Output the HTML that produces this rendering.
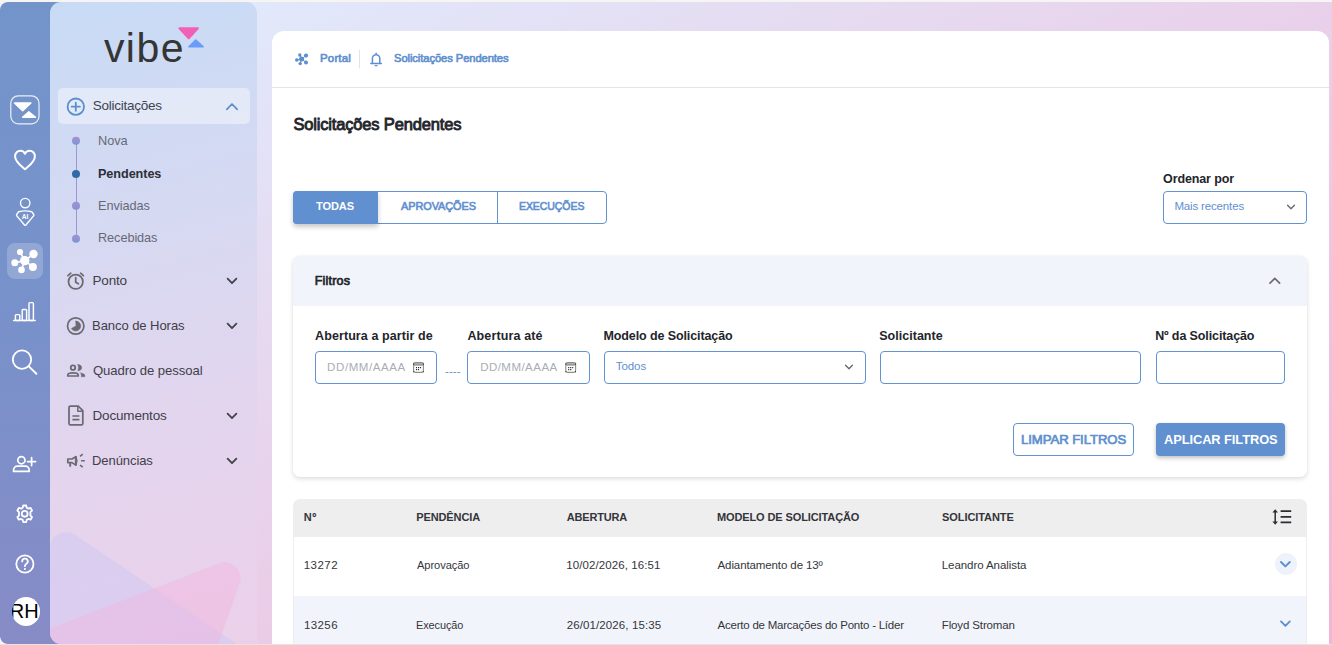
<!DOCTYPE html>
<html lang="pt-BR">
<head>
<meta charset="utf-8">
<title>Solicitações Pendentes</title>
<style>
html,body{margin:0;padding:0}
body{width:1332px;height:645px;overflow:hidden;position:relative;background:#f6f5f3;font-family:"Liberation Sans",sans-serif}
.abs{position:absolute;box-sizing:border-box}
#app{left:0;top:2px;width:1332px;height:642px;border-radius:7.5px 0 0 7.5px;background:linear-gradient(154deg,#dfeefe 0%,#f3b4d7 100%);overflow:hidden}
#botline{left:0;top:644px;width:1332px;height:1px;background:#e4e4e0}
#rail{left:0;top:0;width:70px;height:642px;border-radius:7.5px 0 0 7.5px;background:linear-gradient(180deg,#7394cb 0%,#7891ca 50%,#878bc6 100%)}
#side{left:50px;top:0;width:207px;height:642px;border-radius:11px 11px 0 11px;background:linear-gradient(165deg,#c8dbf5 0%,#d6d9f2 35%,#e3d5ee 65%,#ecd0ea 100%);overflow:hidden}
#card{left:272px;top:29px;width:1057px;height:620px;border-radius:12px 12px 0 0;background:#fff}
#hline{left:272px;top:85px;width:1057px;height:1px;background:#e3e5e8}
.t{position:absolute;white-space:pre;font-family:"Liberation Sans",sans-serif}
.bx{position:absolute;box-sizing:border-box;border:1px solid #6392d1;border-radius:4px;background:#fff}
svg.ov{position:absolute;left:0;top:0;width:1332px;height:645px;pointer-events:none}
</style>
</head>
<body>
<div id="app" class="abs">
  <div id="rail" class="abs"></div>
  <div id="side" class="abs">
    <svg class="abs" style="left:0;top:0" width="207" height="642" viewBox="50 2 207 642">
      <path d="M50 700 L50 548.4 A16.3 16.3 0 0 1 75.4 534.9 L260 659.5 L260 700 Z" fill="#c9c8f5" fill-opacity="0.45"/>
      <path d="M30 636.4 L218.5 563.4 A16 16 0 0 1 239.5 584 L211 664.5 L30 664.5 Z" fill="#f2b3de" fill-opacity="0.42"/>
    </svg>
  </div>
  <div id="card" class="abs"></div>
  <div id="hline" class="abs"></div>

  <!-- sidebar active pill -->
  <div class="abs" style="left:58px;top:86px;width:192px;height:36px;border-radius:5px;background:rgba(255,255,255,.42)"></div>

  <!-- tabs -->
  <div class="bx" style="left:293px;top:189px;width:314px;height:33px"></div>
  <div class="abs" style="left:293px;top:189px;width:85px;height:33px;border-radius:4px 0 0 4px;background:#6090cf;box-shadow:0 3px 5px rgba(0,0,0,.22)"></div>
  <div class="abs" style="left:497px;top:189px;width:1px;height:33px;background:#6392d1"></div>

  <!-- order select -->
  <div class="bx" style="left:1163px;top:189px;width:144px;height:33px"></div>

  <!-- filter panel -->
  <div class="abs" style="left:293px;top:254px;width:1014px;height:221px;border-radius:7px;background:#fff;box-shadow:0 2px 5px rgba(0,0,0,.13),0 0 2px rgba(0,0,0,.06)"></div>
  <div class="abs" style="left:293px;top:254px;width:1014px;height:50px;border-radius:7px 7px 0 0;background:#f1f4fa"></div>
  <div class="bx" style="left:315px;top:349px;width:122px;height:33px"></div>
  <div class="bx" style="left:467px;top:349px;width:123px;height:33px"></div>
  <div class="bx" style="left:604px;top:349px;width:262px;height:33px"></div>
  <div class="bx" style="left:880px;top:349px;width:261px;height:33px"></div>
  <div class="bx" style="left:1156px;top:349px;width:129px;height:33px"></div>
  <div class="bx" style="left:1013px;top:421px;width:121px;height:33px"></div>
  <div class="abs" style="left:1156px;top:421px;width:129px;height:33px;border-radius:4px;background:#6090cf;box-shadow:0 2px 4px rgba(0,0,0,.25)"></div>

  <!-- table -->
  <div class="abs" style="left:293px;top:497px;width:1014px;height:38px;border-radius:7px 7px 0 0;background:#eeeeee"></div>
  <div class="abs" style="left:293px;top:535px;width:1014px;height:120px;border-left:1px solid #efefef;border-right:1px solid #efefef"></div>
  <div class="abs" style="left:293px;top:594px;width:1014px;height:60px;background:#f1f4fa;border-left:1px solid #ebedf1;border-right:1px solid #ebedf1"></div>
  <div class="abs" style="left:1274.5px;top:551px;width:22px;height:22px;border-radius:50%;background:#edf2fb"></div>

  <!-- avatar -->
  <div class="abs" style="left:12px;top:595px;width:28px;height:28.6px;border-radius:50%;background:#fff;overflow:hidden"><span class="t" style="left:-2.32px;top:3.00px;font-size:20px;line-height:22px;font-weight:400;color:#000;letter-spacing:0.136px">RH</span></div>
</div>
<div id="botline" class="abs"></div>

<div class="logo">
<span class="t" style="left:103.88px;top:25px;font-size:41px;line-height:46px;font-weight:400;color:#353535;letter-spacing:1.475px">vibe</span>
</div>
<nav aria-label="Menu">
<span class="t" style="left:92.71px;top:98px;font-size:13.5px;line-height:15px;font-weight:400;color:#3f4450;letter-spacing:-0.253px">Solicitações</span>
<span class="t" style="left:97.83px;top:133px;font-size:13.5px;line-height:15px;font-weight:400;color:#666a75;letter-spacing:-0.080px;transform-origin:0 50%;transform:scaleX(0.9456)">Nova</span>
<span class="t" style="left:97.87px;top:166px;font-size:13.5px;line-height:15px;font-weight:700;color:#2d2f36;letter-spacing:-0.080px;transform-origin:0 50%;transform:scaleX(0.9372)">Pendentes</span>
<span class="t" style="left:97.83px;top:198px;font-size:13.5px;line-height:15px;font-weight:400;color:#666a75;letter-spacing:-0.080px;transform-origin:0 50%;transform:scaleX(0.9427)">Enviadas</span>
<span class="t" style="left:97.83px;top:230px;font-size:13.5px;line-height:15px;font-weight:400;color:#666a75;letter-spacing:-0.080px;transform-origin:0 50%;transform:scaleX(0.9418)">Recebidas</span>
<span class="t" style="left:92.53px;top:273px;font-size:13.5px;line-height:15px;font-weight:400;color:#3f4048;letter-spacing:-0.170px">Ponto</span>
<span class="t" style="left:92.32px;top:318px;font-size:13.5px;line-height:15px;font-weight:400;color:#3f4048;letter-spacing:-0.080px;transform-origin:0 50%;transform:scaleX(0.9668)">Banco de Horas</span>
<span class="t" style="left:93.08px;top:363px;font-size:13.5px;line-height:15px;font-weight:400;color:#3f4048;letter-spacing:-0.080px;transform-origin:0 50%;transform:scaleX(0.9714)">Quadro de pessoal</span>
<span class="t" style="left:92.53px;top:408px;font-size:13.5px;line-height:15px;font-weight:400;color:#3f4048;letter-spacing:-0.173px">Documentos</span>
<span class="t" style="left:92.32px;top:453px;font-size:13.5px;line-height:15px;font-weight:400;color:#3f4048;letter-spacing:-0.080px;transform-origin:0 50%;transform:scaleX(0.9637)">Denúncias</span>
</nav>
<nav aria-label="breadcrumb">
<span class="t" style="left:320.05px;top:52px;font-size:11.5px;line-height:12px;font-weight:400;-webkit-text-stroke:0.66px currentColor;color:#5f90d0;letter-spacing:0.141px">Portal</span>
<span class="t" style="left:393.59px;top:52px;font-size:11.5px;line-height:12px;font-weight:400;-webkit-text-stroke:0.66px currentColor;color:#5f90d0;letter-spacing:-0.080px;transform-origin:0 50%;transform:scaleX(0.9721)">Solicitações Pendentes</span>
</nav>
<h1 style="margin:0">
<span class="t" style="left:293.38px;top:115px;font-size:16.5px;line-height:18px;font-weight:400;-webkit-text-stroke:0.86px currentColor;color:#23252b;letter-spacing:-0.165px">Solicitações Pendentes</span>
</h1>
<div role="tablist">
<span class="t" style="left:316.42px;top:200px;font-size:11.5px;line-height:12px;font-weight:700;color:#ffffff;letter-spacing:-0.080px;transform-origin:0 50%;transform:scaleX(0.9596)">TODAS</span>
<span class="t" style="left:400.61px;top:200px;font-size:11.5px;line-height:12px;font-weight:400;-webkit-text-stroke:0.66px currentColor;color:#5f90d0;letter-spacing:-0.080px;transform-origin:0 50%;transform:scaleX(0.9493)">APROVAÇÕES</span>
<span class="t" style="left:518.83px;top:200px;font-size:11.5px;line-height:12px;font-weight:400;-webkit-text-stroke:0.66px currentColor;color:#5f90d0;letter-spacing:-0.080px;transform-origin:0 50%;transform:scaleX(0.9137)">EXECUÇÕES</span>
</div>
<div class="order">
<span class="t" style="left:1163.08px;top:172px;font-size:12.5px;line-height:14px;font-weight:700;color:#23252b;letter-spacing:-0.127px">Ordenar por</span>
<span class="t" style="left:1174.41px;top:200px;font-size:11.5px;line-height:12px;font-weight:400;color:#5f90d0;letter-spacing:-0.155px">Mais recentes</span>
</div>
<section aria-label="Filtros">
<span class="t" style="left:314.73px;top:274px;font-size:12.5px;line-height:14px;font-weight:400;-webkit-text-stroke:0.70px currentColor;color:#23252b;letter-spacing:0.194px">Filtros</span>
<span class="t" style="left:315.10px;top:329px;font-size:12.5px;line-height:14px;font-weight:700;color:#23252b;letter-spacing:0.083px">Abertura a partir de</span>
<span class="t" style="left:467.42px;top:329px;font-size:12.5px;line-height:14px;font-weight:700;color:#23252b;letter-spacing:0.131px">Abertura até</span>
<span class="t" style="left:603.43px;top:329px;font-size:12.5px;line-height:14px;font-weight:700;color:#23252b;letter-spacing:-0.103px">Modelo de Solicitação</span>
<span class="t" style="left:879.22px;top:329px;font-size:12.5px;line-height:14px;font-weight:700;color:#23252b;letter-spacing:0.022px">Solicitante</span>
<span class="t" style="left:1155.15px;top:329px;font-size:12.5px;line-height:14px;font-weight:700;color:#23252b;letter-spacing:-0.111px">Nº da Solicitação</span>
<span class="t" style="left:327.10px;top:361px;font-size:11.5px;line-height:12px;font-weight:400;color:#a9adb5;letter-spacing:0.587px">DD/MM/AAAA</span>
<span class="t" style="left:480.17px;top:361px;font-size:11.5px;line-height:12px;font-weight:400;color:#a9adb5;letter-spacing:0.468px">DD/MM/AAAA</span>
<span class="t" style="left:445.11px;top:365px;font-size:11.5px;line-height:12px;font-weight:400;color:#5f90d0;letter-spacing:0.012px">----</span>
<span class="t" style="left:615.81px;top:360px;font-size:11.5px;line-height:12px;font-weight:400;color:#5f90d0;letter-spacing:-0.086px">Todos</span>
<span class="t" style="left:1020.95px;top:432px;font-size:13.5px;line-height:15px;font-weight:400;-webkit-text-stroke:0.74px currentColor;color:#5f90d0;letter-spacing:-0.080px;transform-origin:0 50%;transform:scaleX(0.9749)">LIMPAR FILTROS</span>
<span class="t" style="left:1163.77px;top:432px;font-size:13.5px;line-height:15px;font-weight:700;color:#ffffff;letter-spacing:-0.080px;transform-origin:0 50%;transform:scaleX(0.9518)">APLICAR FILTROS</span>
</section>
<div role="row" class="thead">
<span class="t" style="left:303.84px;top:511px;font-size:11px;line-height:12px;font-weight:700;color:#33353b;letter-spacing:0.442px">Nº</span>
<span class="t" style="left:416.14px;top:511px;font-size:11px;line-height:12px;font-weight:700;color:#33353b;letter-spacing:-0.086px">PENDÊNCIA</span>
<span class="t" style="left:566.84px;top:511px;font-size:11px;line-height:12px;font-weight:700;color:#33353b;letter-spacing:-0.194px">ABERTURA</span>
<span class="t" style="left:716.94px;top:511px;font-size:11px;line-height:12px;font-weight:700;color:#33353b;letter-spacing:-0.107px">MODELO DE SOLICITAÇÃO</span>
<span class="t" style="left:942.09px;top:511px;font-size:11px;line-height:12px;font-weight:700;color:#33353b;letter-spacing:-0.078px">SOLICITANTE</span>
</div>
<div role="row">
<span class="t" style="left:303.78px;top:559px;font-size:11.5px;line-height:12px;font-weight:400;color:#33353b;letter-spacing:0.458px">13272</span>
<span class="t" style="left:416.93px;top:559px;font-size:11.5px;line-height:12px;font-weight:400;color:#33353b;letter-spacing:-0.080px;transform-origin:0 50%;transform:scaleX(0.9667)">Aprovação</span>
<span class="t" style="left:566.32px;top:559px;font-size:11.5px;line-height:12px;font-weight:400;color:#33353b;letter-spacing:0.082px">10/02/2026, 16:51</span>
<span class="t" style="left:717.54px;top:559px;font-size:11.5px;line-height:12px;font-weight:400;color:#33353b;letter-spacing:-0.104px">Adiantamento de 13º</span>
<span class="t" style="left:941.78px;top:559px;font-size:11.5px;line-height:12px;font-weight:400;color:#33353b;letter-spacing:-0.068px">Leandro Analista</span>
</div>
<div role="row">
<span class="t" style="left:303.97px;top:619px;font-size:11.5px;line-height:12px;font-weight:400;color:#33353b;letter-spacing:0.396px">13256</span>
<span class="t" style="left:416.30px;top:619px;font-size:11.5px;line-height:12px;font-weight:400;color:#33353b;letter-spacing:-0.080px;transform-origin:0 50%;transform:scaleX(0.9473)">Execução</span>
<span class="t" style="left:566.72px;top:619px;font-size:11.5px;line-height:12px;font-weight:400;color:#33353b;letter-spacing:0.103px">26/01/2026, 15:35</span>
<span class="t" style="left:717.54px;top:619px;font-size:11.5px;line-height:12px;font-weight:400;color:#33353b;letter-spacing:-0.224px">Acerto de Marcações do Ponto - Líder</span>
<span class="t" style="left:941.79px;top:619px;font-size:11.5px;line-height:12px;font-weight:400;color:#33353b;letter-spacing:-0.133px">Floyd Stroman</span>
</div>

<svg class="ov" viewBox="0 0 1332 645" fill="none" stroke-linecap="round" stroke-linejoin="round">
<!-- ===== rail icons (white) ===== -->
<g stroke="#fff" stroke-width="1.6">
  <!-- 1 vibe mark -->
  <rect x="10.8" y="95.8" width="28.2" height="28" rx="7.5" stroke-width="1.2" stroke-opacity="0.85"/>
  <path d="M14.5 103 H30.9 L22.7 110.6 Z" fill="#fff" stroke-width="1.5"/>
  <path d="M28.8 111.6 L35.6 117.3 H22.5 Z" fill="#fff" stroke-width="1.2"/>
  <!-- 2 heart -->
  <path d="M25 169.3 C21.8 166.4 15.1 161.8 15.1 156.4 C15.1 153.1 17.6 150.7 20.4 150.7 C22.4 150.7 24.2 151.9 25 153.8 C25.8 151.9 27.6 150.7 29.6 150.7 C32.4 150.7 34.9 153.1 34.9 156.4 C34.9 161.8 28.2 166.4 25 169.3 Z" stroke-width="2"/>
  <!-- 3 AI person -->
  <circle cx="25.2" cy="203.1" r="4.7" stroke-width="1.4"/>
  <path d="M18.6 211.7 Q25.2 210.1 31.8 211.7 L33.7 214.5 Q34.1 215.3 33.6 215.9 L25.9 225 Q25.2 225.7 24.5 225 L16.8 215.9 Q16.3 215.3 16.7 214.5 Z" stroke-width="1.4"/>
  <!-- 5 bar chart -->
  <g stroke-width="1.45">
    <path d="M13.6 320.4 H35.2"/>
    <rect x="15.4" y="314.6" width="4.4" height="5.8" rx="0.8"/>
    <rect x="22.2" y="309.4" width="4.4" height="11" rx="0.8"/>
    <rect x="29" y="302.6" width="4.4" height="17.8" rx="0.8"/>
  </g>
  <!-- 6 search -->
  <circle cx="22" cy="359.6" r="9.2" stroke-width="1.8"/>
  <path d="M28.8 366.4 L36.4 373.8" stroke-width="1.9"/>
  <!-- 7 person add -->
  <g stroke-width="1.75">
    <circle cx="21.4" cy="460.2" r="3.6"/>
    <path d="M13.6 471.4 V470 A3.8 3.8 0 0 1 17.4 466.2 H25.4 A3.8 3.8 0 0 1 29.2 470 V471.4 Z"/>
    <path d="M31.6 457.6 V465.6 M27.6 461.6 H35.6"/>
  </g>
  <!-- 9 help -->
  <circle cx="24.9" cy="564" r="8.6" stroke-width="1.8"/>
  <path d="M22.2 561.4 A2.8 2.8 0 1 1 26.4 563.8 C25.4 564.4 24.9 565 24.9 566.2" stroke-width="1.8"/>
  <circle cx="24.9" cy="569" r="1.05" fill="#fff" stroke="none"/>
</g>
<text x="25" y="218.7" text-anchor="middle" font-family="Liberation Sans, sans-serif" font-size="6.6" font-weight="700" fill="#fff" stroke="none">AI</text>
<!-- 4 active network -->
<rect x="7" y="243" width="36" height="36" rx="8" fill="#fff" fill-opacity="0.2" stroke="none"/>
<g stroke="#fff" stroke-width="1.6" fill="#fff">
  <path d="M24.8 260.6 L20 252 M24.8 260.6 L33.5 254 M24.8 260.6 L14.8 262.7 M24.8 260.6 L21.5 269.9 M24.8 260.6 L32.9 266.9"/>
  <circle cx="24.8" cy="260.6" r="4.7" stroke="none"/>
  <circle cx="20" cy="252" r="3.1" stroke="none"/>
  <circle cx="33.5" cy="254" r="4.2" stroke="none"/>
  <circle cx="14.8" cy="262.7" r="3.5" stroke="none"/>
  <circle cx="21.5" cy="269.9" r="3.3" stroke="none"/>
  <circle cx="32.9" cy="266.9" r="4" stroke="none"/>
</g>
<!-- 8 gear -->
<g transform="translate(24.7 513.8) scale(0.92)" stroke="#fff" stroke-width="1.95">
  <circle r="3.2"/>
  <path d="M-1.6 -9 H1.6 L2.2 -6.6 L4 -5.6 L6.4 -6.4 L8 -3.6 L6.2 -1.9 V1.9 L8 3.6 L6.4 6.4 L4 5.6 L2.2 6.6 L1.6 9 H-1.6 L-2.2 6.6 L-4 5.6 L-6.4 6.4 L-8 3.6 L-6.2 1.9 V-1.9 L-8 -3.6 L-6.4 -6.4 L-4 -5.6 L-2.2 -6.6 Z"/>
</g>

<!-- ===== sidebar icons ===== -->
<g stroke="#5c8ecb" stroke-width="1.8">
  <circle cx="75.8" cy="106.7" r="8.2"/>
  <path d="M75.8 102.6 V110.8 M71.7 106.7 H79.9"/>
  <path d="M226.8 109.4 L232 104 L237.2 109.4" stroke-width="1.7"/>
</g>
<defs>
  <linearGradient id="dg" x1="0" y1="0" x2="0" y2="1"><stop offset="0" stop-color="#a88fcf"/><stop offset="1" stop-color="#7b95d6"/></linearGradient>
</defs>
<path d="M76.5 141 V239" stroke="#9c97d4" stroke-width="1"/>
<circle cx="76" cy="140.8" r="4" fill="url(#dg)"/>
<circle cx="76" cy="174" r="4" fill="#2f6aa3"/>
<circle cx="76" cy="205.8" r="4" fill="url(#dg)"/>
<circle cx="76" cy="238.7" r="4" fill="url(#dg)"/>
<!-- chevrons down -->
<g stroke="#43444a" stroke-width="1.8">
  <path d="M227.6 278.6 L232 283.2 L236.4 278.6"/>
  <path d="M227.6 323.6 L232 328.2 L236.4 323.6"/>
  <path d="M227.6 413.6 L232 418.2 L236.4 413.6"/>
  <path d="M227.6 458.6 L232 463.2 L236.4 458.6"/>
</g>
<g stroke="#6a6a72" stroke-width="1.75">
  <!-- alarm clock -->
  <circle cx="75.7" cy="281.8" r="7.2"/>
  <path d="M75.7 277.6 V282.2 L78.4 283.8"/>
  <path d="M68 275.6 L70.8 273.2 M83.4 275.6 L80.6 273.2"/>
  <!-- banco de horas -->
  <circle cx="75.7" cy="326" r="8.2"/>
  <path d="M75.9 321 A5 5 0 1 1 71.4 328.6 L75.9 326 Z" fill="#6a6a72" stroke-width="0.6"/>
  <!-- documentos -->
  <path d="M70.4 406 H78.2 L82.8 410.6 V423.5 Q82.8 424.9 81.4 424.9 H70.4 Q69 424.9 69 423.5 V407.4 Q69 406 70.4 406 Z" stroke-width="1.75"/>
  <path d="M77.8 406.6 V411.2 H82.4" stroke-width="1.5"/>
  <path d="M72.4 416 H79.4 M72.4 419.6 H79.4" stroke-width="1.7" stroke-linecap="butt"/>
</g>
<!-- quadro de pessoal (people) -->
<g stroke="#6a6a72" fill="none">
  <circle cx="73" cy="367.7" r="2.25" stroke-width="1.8"/>
  <path d="M67.75 376 V375.2 C67.75 373.5 70.6 372.95 73 372.95 C75.4 372.95 78.25 373.5 78.25 375.2 V376 Z" stroke-width="1.7"/>
  <path d="M77.6 364.5 C83.2 364 83.2 371.3 77.6 370.8 C78.7 369 78.7 366.4 77.6 364.5 Z" fill="#6a6a72" stroke-width="0.3"/>
  <path d="M80.4 372.8 C82.8 373.2 84.9 374.2 84.9 375.6 V376.8 H81.3 V375.2 C81.3 374.2 81 373.4 80.4 372.8 Z" fill="#6a6a72" stroke-width="0.3"/>
</g>
<!-- denúncias (megaphone) -->
<g stroke="#6a6a72" fill="none">
  <path d="M67.8 459 H72 L75.7 456.7 V465.1 L72 462.6 H67.8 Z" stroke-width="1.7"/>
  <path d="M76 456.2 V465.6" stroke-width="1.9" stroke-linecap="butt"/>
  <path d="M77 458.4 A1.8 2.6 0 0 1 77 463.2 Z" fill="#a3a1ac" stroke="none"/>
  <path d="M70.2 463 V466.7" stroke-width="1.9" stroke-linecap="butt"/>
  <path d="M80 456.3 L82.8 454.2 M81.1 460.8 H84.8 M80 465.2 L82.8 467.2" stroke-width="1.6" stroke-linecap="butt"/>
</g>

<!-- ===== main icons ===== -->
<g fill="#5c8fd0" stroke="#5c8fd0" stroke-width="1">
  <path d="M301.6 59 L299.8 55 M301.6 59 L306 55.6 M301.6 59 L296.8 60 M301.6 59 L300.2 63.6 M301.6 59 L306 62.4"/>
  <circle cx="301.6" cy="59" r="2.5" stroke="none"/>
  <circle cx="299.8" cy="55" r="1.7" stroke="none"/>
  <circle cx="306" cy="55.6" r="2.1" stroke="none"/>
  <circle cx="296.8" cy="60" r="1.8" stroke="none"/>
  <circle cx="300.2" cy="63.6" r="1.7" stroke="none"/>
  <circle cx="306" cy="62.4" r="2" stroke="none"/>
</g>
<path d="M359.5 50 V68" stroke="#e2e3e6" stroke-width="1"/>
<g stroke="#5c8fd0" stroke-width="1.5">
  <path d="M370.8 63.4 H381.4 M372.4 63.4 V58.4 A3.7 3.7 0 0 1 379.8 58.4 V63.4 M376.1 54.6 V53.2"/>
  <path d="M375.2 65.6 H377" stroke-width="1.4"/>
</g>
<!-- order select chevron -->
<path d="M1287.6 205.3 L1291 208.7 L1294.4 205.3" stroke="#666b73" stroke-width="1.4"/>
<!-- filtros chevron up -->
<path d="M1270 283.2 L1274.8 278.4 L1279.6 283.2" stroke="#6e6e72" stroke-width="1.7"/>
<!-- calendar icons -->
<g><rect x="413.6" y="362.6" width="9.8" height="9.8" rx="1.8" fill="#fff" stroke="#8c8c8c" stroke-width="1.1"/><path d="M413.90000000000003 364.5 H423.1" stroke="#9a9a9a" stroke-width="2.4" stroke-linecap="butt"/><path d="M413.6 363.70000000000005 V364.3 M423.40000000000003 363.70000000000005 V364.3 M413.70000000000005 371.5 V371.90000000000003 M423.3 371.5 V371.90000000000003" stroke="#333" stroke-width="1"/><rect x="415.95" y="367.1" width="1.1" height="1.1" fill="#111" stroke="none"/><rect x="417.95" y="367.1" width="1.1" height="1.1" fill="#111" stroke="none"/><rect x="419.95" y="367.1" width="1.1" height="1.1" fill="#111" stroke="none"/><rect x="415.95" y="369.1" width="1.1" height="1.1" fill="#111" stroke="none"/><rect x="417.95" y="369.1" width="1.1" height="1.1" fill="#111" stroke="none"/>
<rect x="565.8" y="362.6" width="9.8" height="9.8" rx="1.8" fill="#fff" stroke="#8c8c8c" stroke-width="1.1"/><path d="M566.0999999999999 364.5 H575.3" stroke="#9a9a9a" stroke-width="2.4" stroke-linecap="butt"/><path d="M565.8 363.70000000000005 V364.3 M575.5999999999999 363.70000000000005 V364.3 M565.9 371.5 V371.90000000000003 M575.5 371.5 V371.90000000000003" stroke="#333" stroke-width="1"/><rect x="568.15" y="367.1" width="1.1" height="1.1" fill="#111" stroke="none"/><rect x="570.15" y="367.1" width="1.1" height="1.1" fill="#111" stroke="none"/><rect x="572.15" y="367.1" width="1.1" height="1.1" fill="#111" stroke="none"/><rect x="568.15" y="369.1" width="1.1" height="1.1" fill="#111" stroke="none"/><rect x="570.15" y="369.1" width="1.1" height="1.1" fill="#111" stroke="none"/>
</g>
<!-- modelo select chevron -->
<path d="M845.6 365.3 L849 368.7 L852.4 365.3" stroke="#666b73" stroke-width="1.4"/>
<!-- sort icon -->
<g stroke="#2b2d33" stroke-width="1.7" stroke-linecap="butt">
  <path d="M1280.6 511.2 H1291.2 M1280.6 516.8 H1291.2 M1280.6 522.4 H1291.2"/>
  <path d="M1275.2 511 V523" stroke-width="1.5"/>
</g>
<path d="M1272.4 512.4 L1275.2 509.2 L1278 512.4 Z M1272.4 521.6 L1275.2 524.8 L1278 521.6 Z" fill="#2b2d33" stroke="none"/>
<!-- row chevrons -->
<g stroke="#5c8fd0" stroke-width="1.9">
  <path d="M1281 562 L1285.4 566.4 L1289.8 562"/>
  <path d="M1281 621.4 L1285.4 625.8 L1289.8 621.4"/>
</g>
<!-- logo triangles -->
<path d="M179.4 28.2 H197.9 L188.7 38.2 Z" fill="#f25fb6" stroke="#f25fb6" stroke-width="2"/>
<path d="M195.8 40.2 L203.2 46.8 H188.9 Z" fill="#6b9bfb" stroke="#6b9bfb" stroke-width="1.6"/>

</svg>
</body>
</html>
